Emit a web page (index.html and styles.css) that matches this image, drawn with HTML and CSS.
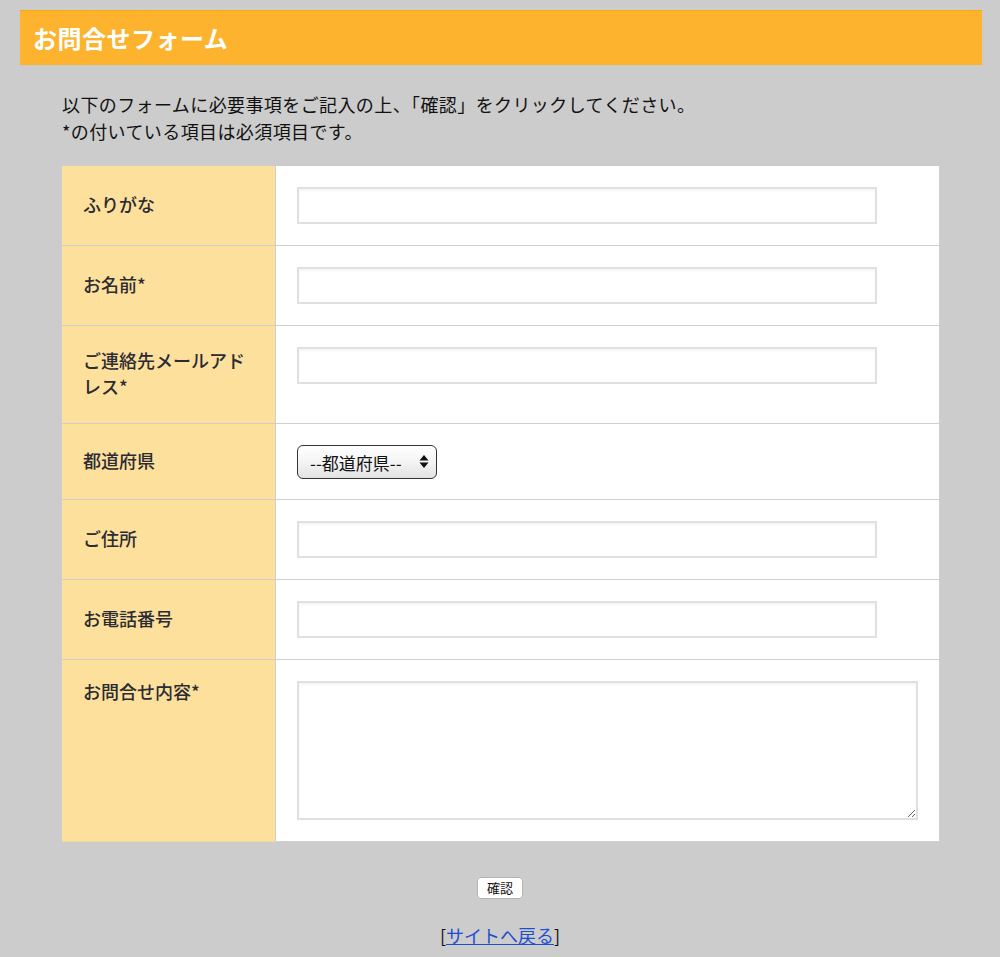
FILE: index.html
```html
<!DOCTYPE html>
<html lang="ja">
<head>
<meta charset="utf-8">
<title>お問合せフォーム</title>
<link rel="stylesheet" href="styles.css">
</head>
<body>
<h1 class="page-title">お問合せフォーム</h1>
<p class="intro">以下のフォームに必要事項をご記入の上、「確認」をクリックしてください。<br>*の付いている項目は必須項目です。</p>
<form class="contact-form">
<table class="form-table">
<tr>
<th>ふりがな</th>
<td><input class="text-input" type="text"></td>
</tr>
<tr>
<th>お名前*</th>
<td><input class="text-input" type="text"></td>
</tr>
<tr>
<th>ご連絡先メールアドレス*</th>
<td><input class="text-input" type="text"></td>
</tr>
<tr>
<th>都道府県</th>
<td class="select-cell">
<span class="select-wrap">
<select class="pref-select"><option>--都道府県--</option></select>
<svg class="select-arrows" width="10" height="15" viewBox="0 0 10 15"><path d="M5 1 L9.5 6.5 L0.5 6.5 Z M0.5 8.5 L9.5 8.5 L5 14 Z" fill="#111"/></svg>
</span>
</td>
</tr>
<tr>
<th>ご住所</th>
<td><input class="text-input" type="text"></td>
</tr>
<tr>
<th>お電話番号</th>
<td><input class="text-input" type="text"></td>
</tr>
<tr>
<th class="top-label">お問合せ内容*</th>
<td><textarea class="text-area"></textarea></td>
</tr>
</table>
<div class="actions"><button class="confirm-btn" type="button">確認</button></div>
</form>
<p class="back">[<a href="#">サイトへ戻る</a>]</p>
</body>
</html>
```

FILE: styles.css
```css
html, body {
  margin: 0;
  padding: 0;
}
body {
  background: #cccccc;
  font-family: "Noto Sans CJK JP", "Noto Sans", sans-serif;
  color: #111;
  height: 957px;
  overflow: hidden;
}
.page-title {
  margin: 10px 18px 0 20px;
  height: 54px;
  line-height: 54px;
  background: #fdb32e;
  border-top: 1px solid #f7a912;
  color: #fff;
  font-size: 24px;
  font-weight: 700;
  letter-spacing: 0.5px;
  padding-left: 13px;
}
.intro {
  margin: 26px 0 0 62px;
  font-size: 18px;
  line-height: 27px;
  letter-spacing: 0.4px;
  color: #111;
}
.contact-form {
  margin: 0;
}
.form-table {
  margin: 21px 0 0 62px;
  width: 878px;
  border-collapse: collapse;
  background: #fff;
}
.form-table th,
.form-table td {
  border: 1px solid #cfcfcf;
}
.form-table tr:first-child th,
.form-table tr:first-child td {
  border-top: none;
}
.form-table th {
  border-left: none;
  width: 172px;
  background: #fde09c;
  text-align: left;
  vertical-align: middle;
  padding: 21px 20px 24px 21px;
  font-size: 18px;
  font-weight: 500;
  line-height: 26px;
  color: #2b2b33;
}
.form-table th.top-label {
  vertical-align: top;
  padding-top: 18px;
}
.form-table tr:last-child th {
  border-bottom: 1px solid #f0d89a;
}
.form-table td {
  padding: 21px;
  vertical-align: top;
}
.form-table td.select-cell {
  padding-bottom: 20px;
}
.text-input {
  display: block;
  box-sizing: border-box;
  width: 580px;
  height: 37px;
  margin: 0;
  border: 2px solid #e0e0e0;
  box-shadow: inset 0 2px 2px rgba(0, 0, 0, 0.04);
  background: #fff;
  font-size: 16px;
}
.select-wrap {
  position: relative;
  display: inline-block;
  vertical-align: top;
}
.pref-select {
  -webkit-appearance: none;
  appearance: none;
  display: block;
  box-sizing: border-box;
  width: 140px;
  height: 34px;
  margin: 0;
  padding: 0 0 0 12px;
  border: 1px solid #333;
  border-radius: 6px;
  background: linear-gradient(#ffffff, #f4f4f4 50%, #e2e2e2);
  font-family: "Noto Sans CJK JP", "Noto Sans", sans-serif;
  font-size: 17px;
  color: #111;
}
.select-arrows {
  position: absolute;
  right: 8px;
  top: 9px;
  pointer-events: none;
}
.text-area {
  display: block;
  box-sizing: border-box;
  width: 621px;
  height: 139px;
  margin: 0;
  border: 2px solid #e0e0e0;
  box-shadow: inset 0 2px 2px rgba(0, 0, 0, 0.04);
  resize: both;
}
.actions {
  text-align: center;
  margin-top: 32px;
}
.confirm-btn {
  box-sizing: border-box;
  width: 46px;
  height: 22px;
  padding: 0;
  background: #fff;
  border: 1px solid #b5b5b5;
  border-radius: 4px;
  font-family: "Noto Sans CJK JP", sans-serif;
  font-size: 13px;
  line-height: 20px;
  color: #111;
}
.back {
  margin: 23px 0 0 0;
  text-align: center;
  font-size: 18px;
  line-height: 26px;
  color: #111;
}
.back a {
  color: #1f4fd1;
  text-decoration: underline;
}
```
